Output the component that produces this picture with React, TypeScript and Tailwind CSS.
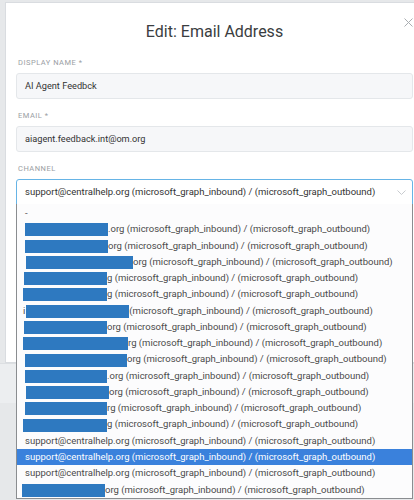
const REST = " (microsoft_graph_inbound) / (microsoft_graph_outbound)";
const FULL = "support@centralhelp.org" + REST;

type Row =
  | { kind: "dash" }
  | { kind: "plain"; active?: boolean }
  | { kind: "masked"; left: number; width: number; tail: string; lead?: string };

// channel options; masked rows hide the mailbox part of the address
const rows: Row[] = [
  { kind: "dash" },
  { kind: "masked", left: 8, width: 83, tail: ".org" },
  { kind: "masked", left: 8, width: 83, tail: "org" },
  { kind: "masked", left: 9, width: 107, tail: "org" },
  { kind: "masked", left: 7, width: 83, tail: "g" },
  { kind: "masked", left: 6, width: 84, tail: "g" },
  { kind: "masked", left: 6, width: 103, tail: "", lead: "i" },
  { kind: "masked", left: 7, width: 83, tail: "org" },
  { kind: "masked", left: 6, width: 105, tail: "rg" },
  { kind: "masked", left: 8, width: 102, tail: "org" },
  { kind: "masked", left: 8, width: 82, tail: ".org" },
  { kind: "masked", left: 9, width: 83, tail: "org" },
  { kind: "masked", left: 8, width: 82, tail: "rg" },
  { kind: "masked", left: 6, width: 84, tail: "g" },
  { kind: "plain" },
  { kind: "plain", active: true },
  { kind: "plain" },
  { kind: "masked", left: 5, width: 83, tail: "org" },
];

function Label({ text }: { text: string }) {
  return <div className="h-[10px] pl-[2px] text-[7.5px] leading-[10px] tracking-[0.5px] text-[#9a9ea3] uppercase">{text}</div>;
}

function Field({ label, value }: { label: string; value: string }) {
  return (
    <div className="flex flex-col">
      <Label text={label} />
      <div className="mt-[5px] flex h-[26px] items-center rounded-[3px] border border-[#e4e7ea] bg-[#f6f7f9] pl-[8px] text-[9.2px] text-[#333]">
        {value}
      </div>
    </div>
  );
}

function OptionRow({ row }: { row: Row }) {
  if (row.kind === "dash") {
    return <div className="flex h-[16.27px] items-center pl-[8px] text-[9.5px] text-[#555]">-</div>;
  }
  if (row.kind === "plain") {
    return (
      <div
        className={
          row.active
            ? "flex h-[16.27px] items-center bg-[#3a81dc] pl-[8px] text-[9.5px] whitespace-nowrap text-white"
            : "flex h-[16.27px] items-center pl-[8px] text-[9.5px] whitespace-nowrap text-[#4a4a4a]"
        }
      >
        {FULL}
      </div>
    );
  }
  return (
    <div className="flex h-[16.27px] items-center text-[9.5px] whitespace-nowrap text-[#4a4a4a]" style={{ paddingLeft: row.left }}>
      {row.lead && <span className="mr-[1px]">{row.lead}</span>}
      <span className="mt-[1px] h-[13px] shrink-0 bg-[#2e79c0]" style={{ width: row.width }} />
      <span>{row.tail + REST}</span>
    </div>
  );
}

export default function App() {
  return (
    <div className="relative h-[500px] w-[414px] overflow-hidden bg-[#e6e8ea] font-[Roboto,sans-serif]">
      <div className="ml-[5px] mt-[2px] h-[361px] w-[419px] border border-[#d9dce0] bg-white px-[10px]">
        <div className="relative pt-[19px]">
          <h1 className="text-center text-[16px] leading-[20px] text-[#3a3d40]">Edit: Email Address</h1>
          <svg className="absolute right-0 top-[15px]" width="9" height="9" viewBox="0 0 9 9">
            <path d="M0.5 0.5 L8.5 8.5 M8.5 0.5 L0.5 8.5" stroke="#a9adb1" strokeWidth="1" fill="none" />
          </svg>
        </div>
        <div className="mt-[16px] flex flex-col gap-[12px]">
          <Field label="Display Name *" value="AI Agent Feedbck" />
          <Field label="Email *" value="aiagent.feedback.int@om.org" />
          <div className="flex flex-col">
            <Label text="Channel" />
            <div className="mt-[5px] flex h-[26px] items-center justify-between rounded-t-[3px] border border-[#66b4e6] bg-white pl-[8px] pr-[6px] text-[9.5px] whitespace-nowrap text-[#333]">
              <span>{FULL}</span>
              <svg width="9" height="5" viewBox="0 0 9 5">
                <path d="M0.5 0.5 L4.5 4.5 L8.5 0.5" stroke="#c8cbcf" strokeWidth="1" fill="none" />
              </svg>
            </div>
          </div>
        </div>
      </div>
      <div className="h-[40px] border-t border-[#dcdfe2] bg-[#eceef0]" />

      {/* open option list, hangs below the select */}
      <div className="absolute left-[16px] top-[204px] w-[397px] border-x border-b border-[#8a8d90] bg-[#fcfcfd] pt-[1px]">
        {rows.map((row, i) => (
          <OptionRow key={i} row={row} />
        ))}
      </div>
    </div>
  );
}
